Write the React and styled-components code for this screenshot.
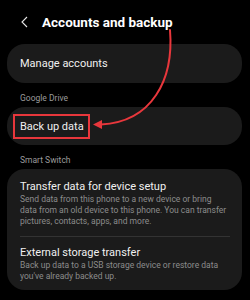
import React from "react";
import styled, { createGlobalStyle } from "styled-components";

const Global = createGlobalStyle`
  html, body { margin: 0; padding: 0; background: #000; }
  body { width: 250px; height: 300px; overflow: hidden; font-family: "Roboto", "Inter", sans-serif; }
`;

const Page = styled.div`
  position: relative;
  width: 250px;
  height: 300px;
  background: #000;
  color: #f2f2f2;
  box-sizing: border-box;
  padding: 0 8px 0 7px;
`;

const Header = styled.div`
  display: flex;
  align-items: center;
  height: 44px;
  padding-left: 14px;
  gap: 14px;
`;

const Title = styled.h1`
  margin: 0;
  font-size: 13.5px;
  font-weight: 700;
  color: #fff;
`;

const Card = styled.div`
  background: #1b1b1b;
  border-radius: 18px;
  padding: ${(p) => p.$pad || "0 13px"};
`;

const SingleRow = styled.div`
  height: ${(p) => p.$h}px;
  display: flex;
  align-items: center;
  font-size: 11px;
  color: #f0f0f0;
`;

const SectionLabel = styled.div`
  height: 24px;
  box-sizing: border-box;
  padding: 5px 0 0 13px;
  display: flex;
  align-items: center;
  font-size: 8.5px;
  color: #9b9b9b;
`;

const Highlight = styled.span`
  display: inline-block;
  border: 2px solid #e8373c;
  padding: 4px 4px 4px 5px;
  margin-left: -7px;
`;

const Item = styled.div`
  padding: ${(p) => p.$pad};
`;

const ItemTitle = styled.div`
  font-size: 11px;
  line-height: 14px;
  color: #f0f0f0;
`;

const ItemDesc = styled.div`
  font-size: 8.5px;
  line-height: 11px;
  color: #8c8c8c;
`;

const Divider = styled.div`
  height: 1px;
  background: #333;
`;

const Overlay = styled.svg`
  position: absolute;
  left: 0;
  top: 0;
  pointer-events: none;
`;

export default function App() {
  return (
    <>
      <Global />
      <Page>
        <Header>
          <svg width="7" height="12" viewBox="0 0 7 12">
            <path d="M6 1 L1 6 L6 11" fill="none" stroke="#e8e8e8" strokeWidth="1.1" />
          </svg>
          <Title>Accounts and backup</Title>
        </Header>
        <Card>
          <SingleRow $h={39}>Manage accounts</SingleRow>
        </Card>
        <SectionLabel>Google Drive</SectionLabel>
        <Card>
          <SingleRow $h={38}>
            <Highlight>Back up data</Highlight>
          </SingleRow>
        </Card>
        <SectionLabel>Smart Switch</SectionLabel>
        <Card $pad="0 12px 0 13px">
          <Item $pad="11px 0 9px">
            <ItemTitle>Transfer data for device setup</ItemTitle>
            <ItemDesc>
              Send data from this phone to a new device or bring data from an old device to this phone. You can transfer pictures, contacts, apps, and more.
            </ItemDesc>
          </Item>
          <Divider />
          <Item $pad="9px 0 8px">
            <ItemTitle>External storage transfer</ItemTitle>
            <ItemDesc>
              Back up data to a USB storage device or restore data you've already backed up.
            </ItemDesc>
          </Item>
        </Card>
        <Overlay width="250" height="300" viewBox="0 0 250 300">
          <path d="M170 30 C 174 80, 152 122, 101 124.5" fill="none" stroke="#e8373c" strokeWidth="2" strokeLinecap="round" />
          <path d="M93 124.5 L102 120 L102 129 Z" fill="#e8373c" />
        </Overlay>
      </Page>
    </>
  );
}
